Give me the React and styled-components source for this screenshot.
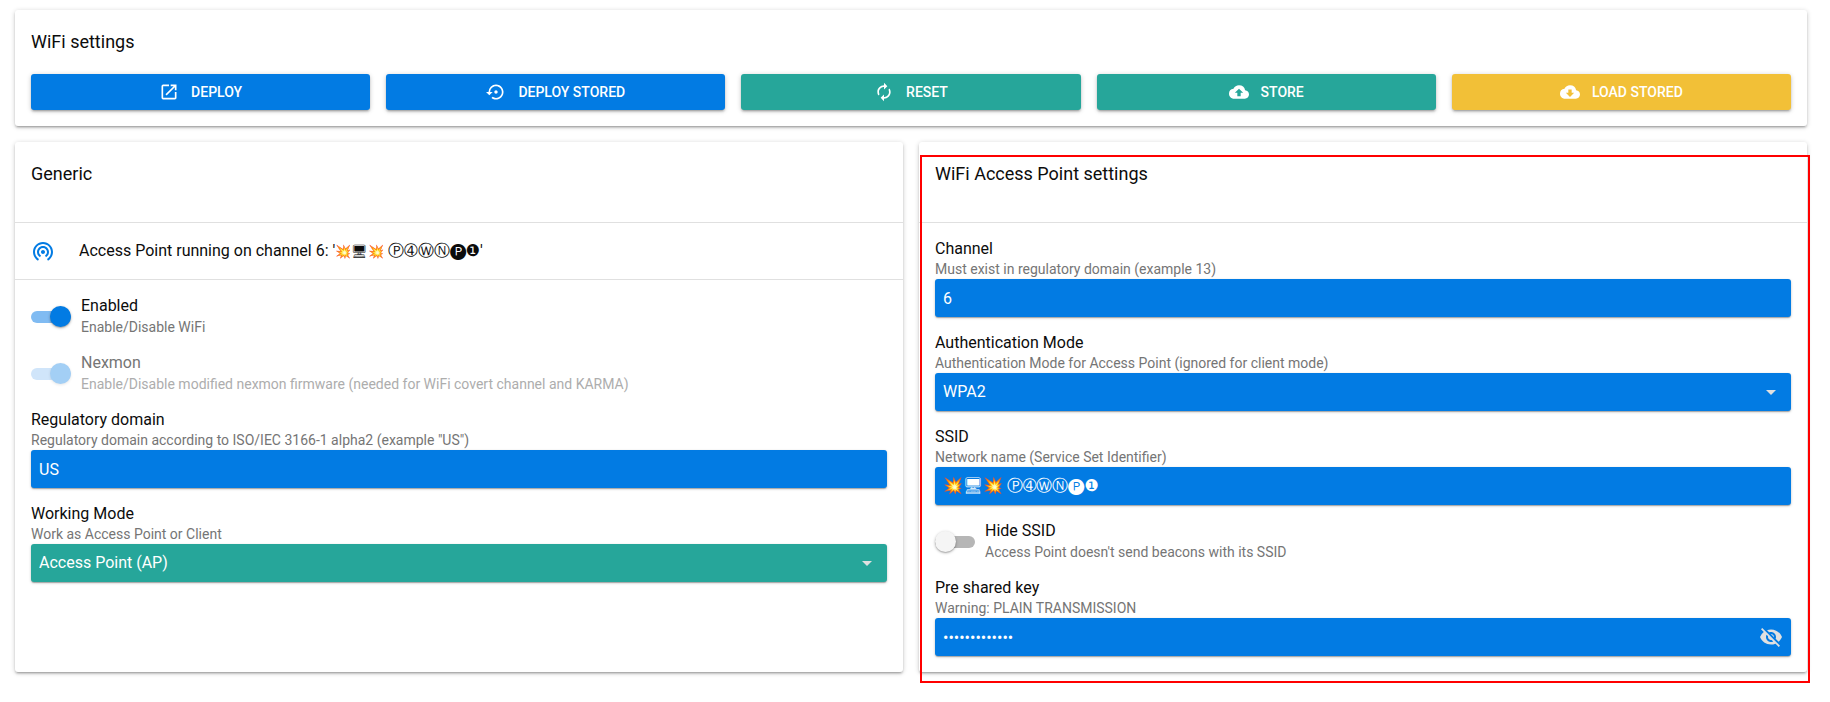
import React, { useState } from "react";
import styled, { createGlobalStyle, css } from "styled-components";
import {
  MdOpenInNew,
  MdSettingsBackupRestore,
  MdAutorenew,
  MdCloudUpload,
  MdCloudDownload,
  MdWifiTethering,
  MdVisibilityOff,
  MdArrowDropDown,
} from "react-icons/md";

const colors = {
  primary: "#027be3",
  secondary: "#26a69a",
  warning: "#f2c037",
  text: "#0c0c0c",
  muted: "#757575",
  line: "#e0e0e0",
};

const GlobalStyle = createGlobalStyle`
  *, *::before, *::after { box-sizing: border-box; }
  body {
    margin: 0;
    background: #fff;
    color: ${colors.text};
    font-family: Roboto, "DejaVu Sans", sans-serif;
    font-size: 16px;
    line-height: 20px;
  }
  button, input, select { font: inherit; }
`;

const raised = css`
  box-shadow: 0 1px 5px rgba(0, 0, 0, 0.2), 0 2px 2px rgba(0, 0, 0, 0.14),
    0 3px 1px -2px rgba(0, 0, 0, 0.12);
`;

const Page = styled.main`
  display: flex;
  flex-direction: column;
  gap: 16px;
  padding: 10px 23px 18px 15px;
`;

const Card = styled.section`
  ${raised}
  position: relative;
  border-radius: 3px;
  background: #fff;
`;

const CardTitle = styled.h2`
  margin: 0;
  padding: 16px;
  font-size: 18px;
  font-weight: 400;
  line-height: 32px;
`;

const PanelHeader = styled.header`
  padding-bottom: 16px;
  border-bottom: 1px solid ${colors.line};
`;

const Toolbar = styled.div`
  display: grid;
  grid-template-columns: repeat(5, 1fr);
  gap: 16px;
  padding: 0 16px 16px;
`;

const ActionButton = styled.button`
  ${raised}
  display: flex;
  align-items: center;
  justify-content: center;
  gap: 12px;
  height: 36px;
  padding: 0 16px;
  border: 0;
  border-radius: 3px;
  background: ${({ $color }) => colors[$color]};
  color: #fff;
  font-size: 14px;
  font-weight: 500;
  text-transform: uppercase;
  cursor: pointer;

  svg {
    width: 20px;
    height: 20px;
  }
`;

const Panels = styled.div`
  display: grid;
  grid-template-columns: 1fr 1fr;
  gap: 16px;
`;

const Highlight = styled.div`
  position: absolute;
  inset: 13px -3px -11px 1px;
  border: 2px solid #f00;
  pointer-events: none;
`;

const StatusRow = styled.div`
  display: flex;
  align-items: center;
  gap: 24px;
  height: 57px;
  padding: 0 16px;
  border-bottom: 1px solid ${colors.line};

  svg {
    width: 24px;
    height: 24px;
    color: ${colors.primary};
  }
`;

const Emoji = styled.span`
  font-size: 13px;
`;

const Settings = styled.div`
  padding: 8px 0;
`;

const Item = styled.div`
  padding: 8px 16px;
`;

const Label = styled.span`
  display: block;
  color: ${({ $disabled }) => ($disabled ? "#757575" : colors.text)};
`;

const Hint = styled.span`
  display: block;
  color: ${({ $disabled }) => ($disabled ? "#adadad" : colors.muted)};
  font-size: 14px;
`;

const Box = styled.div`
  display: flex;
  align-items: center;
  height: 38px;
  padding: 0 8px;
  border-radius: 3px;
  background: ${({ $color }) => colors[$color]};
  box-shadow: 0 1px 3px rgba(0, 0, 0, 0.2), 0 1px 1px rgba(0, 0, 0, 0.14),
    0 2px 1px -1px rgba(0, 0, 0, 0.12);
`;

const control = css`
  flex: 1;
  min-width: 0;
  width: 100%;
  height: 38px;
  padding: 0;
  border: 0;
  outline: 0;
  background: transparent;
  color: #fff;
`;

const TextInput = styled.input`
  ${control}
`;

const SelectGrid = styled.div`
  flex: 1;
  display: grid;
  align-items: center;

  > * {
    grid-area: 1 / 1;
  }

  svg {
    justify-self: end;
    width: 24px;
    height: 24px;
    color: #e0e0e0;
    pointer-events: none;
  }
`;

const Select = styled.select`
  ${control}
  appearance: none;

  option {
    color: ${colors.text};
  }
`;

const IconButton = styled.button`
  display: flex;
  padding: 0;
  border: 0;
  background: transparent;
  color: #e0e0e0;
  cursor: pointer;

  svg {
    width: 24px;
    height: 24px;
  }
`;

const ToggleItem = styled.label`
  display: flex;
  align-items: center;
  gap: 10px;
  height: 57px;
  padding: 0 16px;

  ${Hint} {
    line-height: 22px;
  }
`;

const Switch = styled.input`
  position: relative;
  appearance: none;
  flex: none;
  width: 40px;
  height: 21px;
  margin: 0;

  &::before {
    content: "";
    position: absolute;
    inset: 5px 0 4px;
    border-radius: 6px;
    background: #b6b6b6;
  }

  &::after {
    content: "";
    position: absolute;
    top: 0;
    left: 0;
    width: 21px;
    height: 21px;
    border-radius: 50%;
    background: #f5f5f5;
    box-shadow: 0 1px 3px rgba(0, 0, 0, 0.3), 0 1px 1px rgba(0, 0, 0, 0.14);
  }

  &:checked::before {
    background: #80bbf2;
  }

  &:checked::after {
    left: auto;
    right: 0;
    background: ${colors.primary};
  }

  &:disabled::before {
    background: #d0e5fa;
  }

  &:disabled::after {
    background: #a3cff5;
    box-shadow: 0 1px 3px rgba(0, 0, 0, 0.1);
  }
`;

function Field({ id, label, hint, color = "primary", children }) {
  return (
    <Item>
      <label htmlFor={id}>
        <Label>{label}</Label>
        <Hint>{hint}</Hint>
      </label>
      <Box $color={color}>{children}</Box>
    </Item>
  );
}

function SelectControl({ id, options }) {
  return (
    <SelectGrid>
      <Select id={id} defaultValue={options[0]}>
        {options.map((option) => (
          <option key={option}>{option}</option>
        ))}
      </Select>
      <MdArrowDropDown aria-hidden="true" />
    </SelectGrid>
  );
}

function Toggle({ label, hint, on = false, disabled = false }) {
  return (
    <ToggleItem>
      <Switch type="checkbox" role="switch" defaultChecked={on} disabled={disabled} />
      <span>
        <Label $disabled={disabled}>{label}</Label>
        <Hint $disabled={disabled}>{hint}</Hint>
      </span>
    </ToggleItem>
  );
}

const actions = [
  { label: "Deploy", color: "primary", Icon: MdOpenInNew },
  { label: "Deploy stored", color: "primary", Icon: MdSettingsBackupRestore },
  { label: "Reset", color: "secondary", Icon: MdAutorenew },
  { label: "Store", color: "secondary", Icon: MdCloudUpload },
  { label: "Load stored", color: "warning", Icon: MdCloudDownload },
];

const network = { emoji: "💥🖥💥", name: "Ⓟ➃ⓌⓃ🅟❶" };

export default function App() {
  const [keyVisible, setKeyVisible] = useState(false);

  return (
    <>
      <GlobalStyle />
      <Page>
        <Card>
          <CardTitle>WiFi settings</CardTitle>
          <Toolbar>
            {actions.map(({ label, color, Icon }) => (
              <ActionButton key={label} type="button" $color={color}>
                <Icon aria-hidden="true" />
                {label}
              </ActionButton>
            ))}
          </Toolbar>
        </Card>

        <Panels>
          <Card>
            <PanelHeader>
              <CardTitle>Generic</CardTitle>
            </PanelHeader>
            <StatusRow>
              <MdWifiTethering aria-hidden="true" />
              <span>
                Access Point running on channel 6: '<Emoji>{network.emoji}</Emoji>{" "}
                {network.name}'
              </span>
            </StatusRow>
            <Settings>
              <Toggle label="Enabled" hint="Enable/Disable WiFi" on />
              <Toggle
                label="Nexmon"
                hint="Enable/Disable modified nexmon firmware (needed for WiFi covert channel and KARMA)"
                on
                disabled
              />
              <Field
                id="regulatory"
                label="Regulatory domain"
                hint={'Regulatory domain according to ISO/IEC 3166-1 alpha2 (example "US")'}
              >
                <TextInput id="regulatory" type="text" defaultValue="US" />
              </Field>
              <Field
                id="mode"
                label="Working Mode"
                hint="Work as Access Point or Client"
                color="secondary"
              >
                <SelectControl id="mode" options={["Access Point (AP)"]} />
              </Field>
            </Settings>
          </Card>

          <Card>
            <PanelHeader>
              <CardTitle>WiFi Access Point settings</CardTitle>
            </PanelHeader>
            <Settings>
              <Field
                id="channel"
                label="Channel"
                hint="Must exist in regulatory domain (example 13)"
              >
                <TextInput id="channel" type="text" inputMode="numeric" defaultValue="6" />
              </Field>
              <Field
                id="auth"
                label="Authentication Mode"
                hint="Authentication Mode for Access Point (ignored for client mode)"
              >
                <SelectControl id="auth" options={["WPA2"]} />
              </Field>
              <Field id="ssid" label="SSID" hint="Network name (Service Set Identifier)">
                <TextInput
                  id="ssid"
                  type="text"
                  defaultValue={`${network.emoji} ${network.name}`}
                />
              </Field>
              <Toggle
                label="Hide SSID"
                hint="Access Point doesn't send beacons with its SSID"
              />
              <Field id="psk" label="Pre shared key" hint="Warning: PLAIN TRANSMISSION">
                <TextInput
                  id="psk"
                  type={keyVisible ? "text" : "password"}
                  defaultValue="MaMe82-P4wnP1"
                />
                <IconButton
                  type="button"
                  aria-label="Show or hide key"
                  onClick={() => setKeyVisible(!keyVisible)}
                >
                  <MdVisibilityOff />
                </IconButton>
              </Field>
            </Settings>
            <Highlight />
          </Card>
        </Panels>
      </Page>
    </>
  );
}
